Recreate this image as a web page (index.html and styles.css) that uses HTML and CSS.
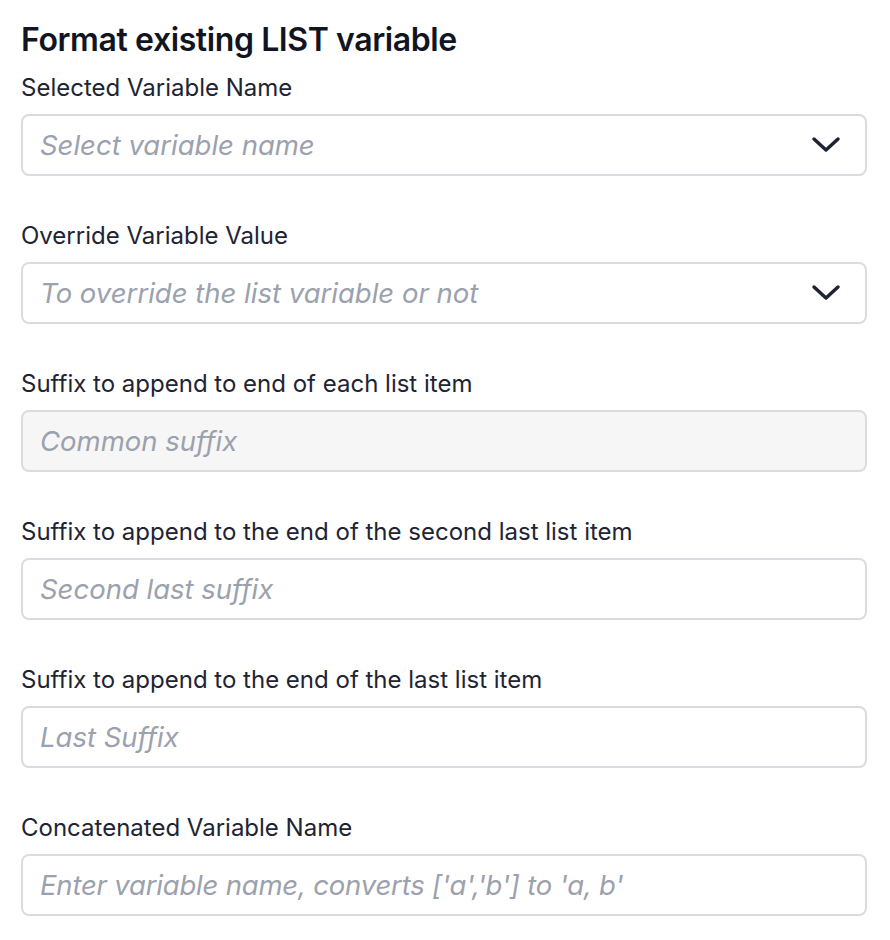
FILE: index.html
```html
<!DOCTYPE html>
<html lang="en">
<head>
  <meta charset="UTF-8">
  <title>Format existing LIST variable</title>
  <link rel="stylesheet" href="styles.css">
</head>
<body>

  <h1>Format existing LIST variable</h1>

  <div class="field">
    <label for="selectedName">Selected Variable Name</label>
    <div class="select" id="selectedName">
      <span class="placeholder">Select variable name</span>
      <svg class="chevron" width="30" height="18" viewBox="0 0 30 18"><polyline points="3,3 15,14 27,3" /></svg>
    </div>
  </div>

  <div class="field">
    <label for="override">Override Variable Value</label>
    <div class="select" id="override">
      <span class="placeholder">To override the list variable or not</span>
      <svg class="chevron" width="30" height="18" viewBox="0 0 30 18"><polyline points="3,3 15,14 27,3" /></svg>
    </div>
  </div>

  <div class="field">
    <label for="commonSuffix">Suffix to append to end of each list item</label>
    <input type="text" id="commonSuffix" class="disabled" placeholder="Common suffix" disabled>
  </div>

  <div class="field">
    <label for="secondSuffix">Suffix to append to the end of the second last list item</label>
    <input type="text" id="secondSuffix" placeholder="Second last suffix">
  </div>

  <div class="field">
    <label for="lastSuffix">Suffix to append to the end of the last list item</label>
    <input type="text" id="lastSuffix" placeholder="Last Suffix">
  </div>

  <div class="field">
    <label for="concatName">Concatenated Variable Name</label>
    <input type="text" id="concatName" class="narrow" placeholder="Enter variable name, converts ['a','b'] to 'a, b'">
  </div>

</body>
</html>
```

FILE: styles.css
```css
body {
  font-family: Inter, "Noto Sans", sans-serif;
  background-color: #ffffff;
  color: #1e2433;
  margin: 0;
  padding: 22px 23px 0 21px;
}
h1 {
  font-size: 32px;
  font-weight: 600;
  line-height: 36px;
  color: #111522;
  margin: 0 0 15px;
  letter-spacing: -0.4px;
}
.field {
  margin-bottom: 45px;
}
label {
  display: block;
  font-size: 24px;
  line-height: 30px;
  margin-bottom: 11px;
}
.select, input[type="text"] {
  box-sizing: border-box;
  display: flex;
  align-items: center;
  justify-content: space-between;
  width: 100%;
  height: 62px;
  padding: 0 24px 0 17px;
  border: 2px solid #dcdce0;
  border-radius: 8px;
  background: #ffffff;
  font-family: Inter, "Noto Sans", sans-serif;
  font-size: 27.5px;
}
.placeholder, input::placeholder {
  color: #9ba1ad;
  font-style: italic;
}
input.narrow::placeholder {
  letter-spacing: -0.2px;
}
input.disabled {
  background: #f6f6f6;
}
.chevron polyline {
  fill: none;
  stroke: #1e2433;
  stroke-width: 3.5;
  stroke-linecap: round;
  stroke-linejoin: round;
}
```
